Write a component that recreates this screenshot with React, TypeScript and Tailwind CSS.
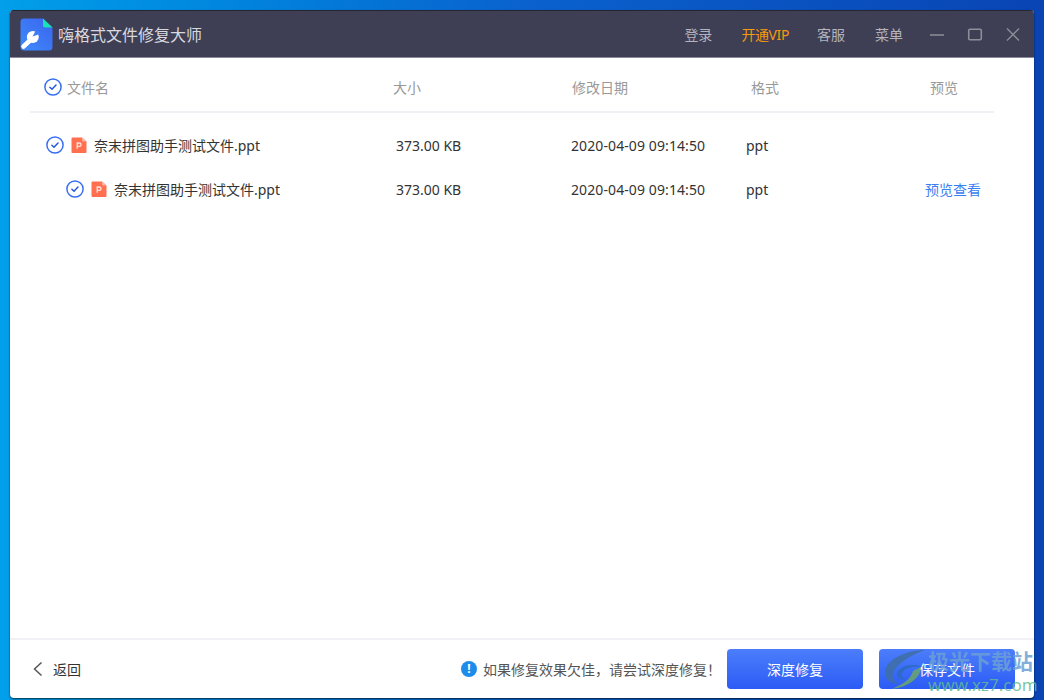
import React from "react";

const font = { fontFamily: '"Noto Sans", "Noto Sans CJK SC", sans-serif' };

function Check({ size = 18 }: { size?: number }) {
  return (
    <svg width={size} height={size} viewBox="0 0 18 18" fill="none" className="shrink-0">
      <circle cx="9" cy="9" r="8.1" stroke="#3A6FF2" strokeWidth="1.5" />
      <path d="M5.9 9.2 L8 11.2 L12 7.1" stroke="#2458E0" strokeWidth="1.5" strokeLinecap="round" strokeLinejoin="round" />
    </svg>
  );
}

function Ppt() {
  return (
    <svg width="16" height="17" viewBox="0 0 16 17" className="shrink-0">
      <path d="M1.5 0.5 H11 L15.5 4.5 V15 a1 1 0 0 1 -1 1 H1.5 a1 1 0 0 1 -1 -1 V1.5 a1 1 0 0 1 1 -1 Z" fill="#FF6F50" />
      <path d="M11 0.5 L15.5 4.5 H12 a1 1 0 0 1 -1 -1 Z" fill="#FFB3A0" />
      <path d="M6.2 11.8 V6 H8.4 a1.6 1.6 0 0 1 0 3.3 H6.2" fill="none" stroke="#FFE4DD" strokeWidth="1.3" />
    </svg>
  );
}

function Row({ indent, preview }: { indent: boolean; preview?: boolean }) {
  return (
    <div className="flex items-center h-[44px] text-[14px] text-[#333333]">
      <div className={indent ? "w-[386px] pl-[56px] flex items-center" : "w-[386px] pl-[36px] flex items-center"}>
        <Check />
        <div className="ml-[7px]"><Ppt /></div>
        <span className="ml-[7px]">奈末拼图助手测试文件.ppt</span>
      </div>
      <div className="w-[175px]">373.00 KB</div>
      <div className="w-[175px] tracking-[0.1px]">2020-04-09 09:14:50</div>
      <div className="w-[179px]">ppt</div>
      {preview && <div className="text-[14px] text-[#3A7FF0]">预览查看</div>}
    </div>
  );
}

function Logo() {
  return (
    <svg width="33" height="33" viewBox="0 0 33 33" className="shrink-0">
      <defs>
        <linearGradient id="lg" x1="0" y1="1" x2="1" y2="0">
          <stop offset="0" stopColor="#3F8CFB" />
          <stop offset="1" stopColor="#3A63EE" />
        </linearGradient>
      </defs>
      <path d="M4 0.5 H23 L32.5 9.5 V29 a3.5 3.5 0 0 1 -3.5 3.5 H4 a3.5 3.5 0 0 1 -3.5 -3.5 V4 a3.5 3.5 0 0 1 3.5 -3.5 Z" fill="url(#lg)" />
      <path d="M23 0.5 L32.5 9.5 H25 a2 2 0 0 1 -2 -2 Z" fill="#19E2B8" />
      <path d="M3.5 28.5 L11 21.5" stroke="#fff" strokeWidth="4.6" strokeLinecap="round" />
      <circle cx="12.8" cy="19" r="6" fill="#fff" />
      <path d="M12.6 18.6 L16.5 11 L21 15.5 Z" fill="#3E7CF6" />
    </svg>
  );
}

export default function App() {
  return (
    <div
      className="relative w-[1044px] h-[700px] overflow-hidden bg-gradient-to-r from-[#029FEA] via-[#0A62CE] to-[#0A44B4] pl-[10px] pr-[10px] pt-[10px] pb-[2px]"
      style={font}
    >
      <div className="w-[1024px] h-[688px] flex flex-col rounded-[4px] overflow-hidden bg-white shadow-[0_1px_2px_rgba(0,0,0,0.7)]">
        <div className="h-[48px] shrink-0 flex items-center bg-[#3E3E54] border-t border-t-[#26262F] border-b border-b-[#8A8A9C] pl-[10px] pt-[1px]">
          <Logo />
          <span className="ml-[5px] text-[16px] text-[#D8D8DE]">嗨格式文件修复大师</span>
          <div className="ml-auto flex items-center text-[14px] text-[#B4B4BC]">
            <span>登录</span>
            <span className="ml-[29px] tracking-[-0.4px] text-[#F59A0C]">开通VIP</span>
            <span className="ml-[28px]">客服</span>
            <span className="ml-[30px]">菜单</span>
            <svg width="16" height="16" viewBox="0 0 16 16" className="ml-[26px]" fill="none">
              <path d="M1 8 H15" stroke="#8E8E98" strokeWidth="1.4" />
            </svg>
            <svg width="16" height="16" viewBox="0 0 16 16" className="ml-[22px]" fill="none">
              <rect x="1.7" y="2.2" width="12.6" height="10.6" rx="1.2" stroke="#8E8E98" strokeWidth="1.6" />
            </svg>
            <svg width="16" height="16" viewBox="0 0 16 16" className="ml-[22px] mr-[13px]" fill="none">
              <path d="M2 1.5 L14 13.5 M14 1.5 L2 13.5" stroke="#8E8E98" strokeWidth="1.4" />
            </svg>
          </div>
        </div>

        <div className="flex-1 flex flex-col pl-[20px] pr-[40px]">
          <div className="h-[55px] shrink-0 flex items-center border-b-2 border-[#F0F0F5] pt-[5px] text-[14px] text-[#999999]">
            <div className="w-[363px] pl-[14px] flex items-center gap-[5px]">
              <Check />
              <span>文件名</span>
            </div>
            <div className="w-[179px]">大小</div>
            <div className="w-[179px]">修改日期</div>
            <div className="w-[179px]">格式</div>
            <div>预览</div>
          </div>
          <div className="pt-[10px] -ml-[20px]">
            <Row indent={false} />
            <Row indent={true} preview />
          </div>
        </div>

        <div className="h-[60px] shrink-0 flex items-center border-t-2 border-[#F0F0F5] pl-[22px] pr-[19px]">
          <svg width="12" height="16" viewBox="0 0 12 16" fill="none">
            <path d="M9.5 1.5 L2.5 8 L9.5 14.5" stroke="#555555" strokeWidth="1.5" />
          </svg>
          <span className="ml-[9px] text-[14px] text-[#333333]">返回</span>
          <div className="ml-auto w-[16px] h-[16px] rounded-full bg-[#1E8CEB] text-white text-[12px] font-bold flex items-center justify-center">!</div>
          <span className="ml-[6px] text-[14px] text-[#555555]">如果修复效果欠佳，请尝试深度修复！</span>
          <button className="ml-[6px] w-[136px] h-[40px] rounded-[4px] bg-gradient-to-b from-[#4C7DFB] to-[#2C5BF5] text-white text-[14px]">深度修复</button>
          <button className="ml-[16px] w-[136px] h-[40px] rounded-[4px] bg-gradient-to-b from-[#4C7DFB] to-[#2C5BF5] text-white text-[14px]">保存文件</button>
        </div>
      </div>

      <div className="absolute left-[882px] top-[648px] w-[160px] h-[52px] pointer-events-none">
        <svg width="44" height="44" viewBox="-1 0 44 44" className="absolute left-[2px] top-[1px]" fill="none">
          <path d="M40 1 C22 1 2 10 0 22 C-1 30 6 35 14 35 C8 32 6 27 9 22 C13 14 26 6 40 1 Z" fill="#3F6FA8" opacity="0.9" />
          <path d="M12 24 C16 16 28 14 38 18 C30 17 20 18 17 24 C16 27 18 30 22 30 C16 31 11 29 12 24 Z" fill="#2C6CC0" opacity="0.9" />
          <path d="M36 18 C36 28 24 38 7 40 C18 35 26 30 28 22 Z" fill="#6FAA5F" opacity="0.8" />
        </svg>
        <div className="absolute left-[46px] top-[-2px] text-[21px] leading-[30px] font-bold text-[#6C9FD6]/85 whitespace-nowrap">极光下载站</div>
        <div className="absolute left-[46px] top-[27px] text-[17px] leading-[20px] text-[#5FBB94]/85 whitespace-nowrap">www.xz7.com</div>
      </div>
    </div>
  );
}
